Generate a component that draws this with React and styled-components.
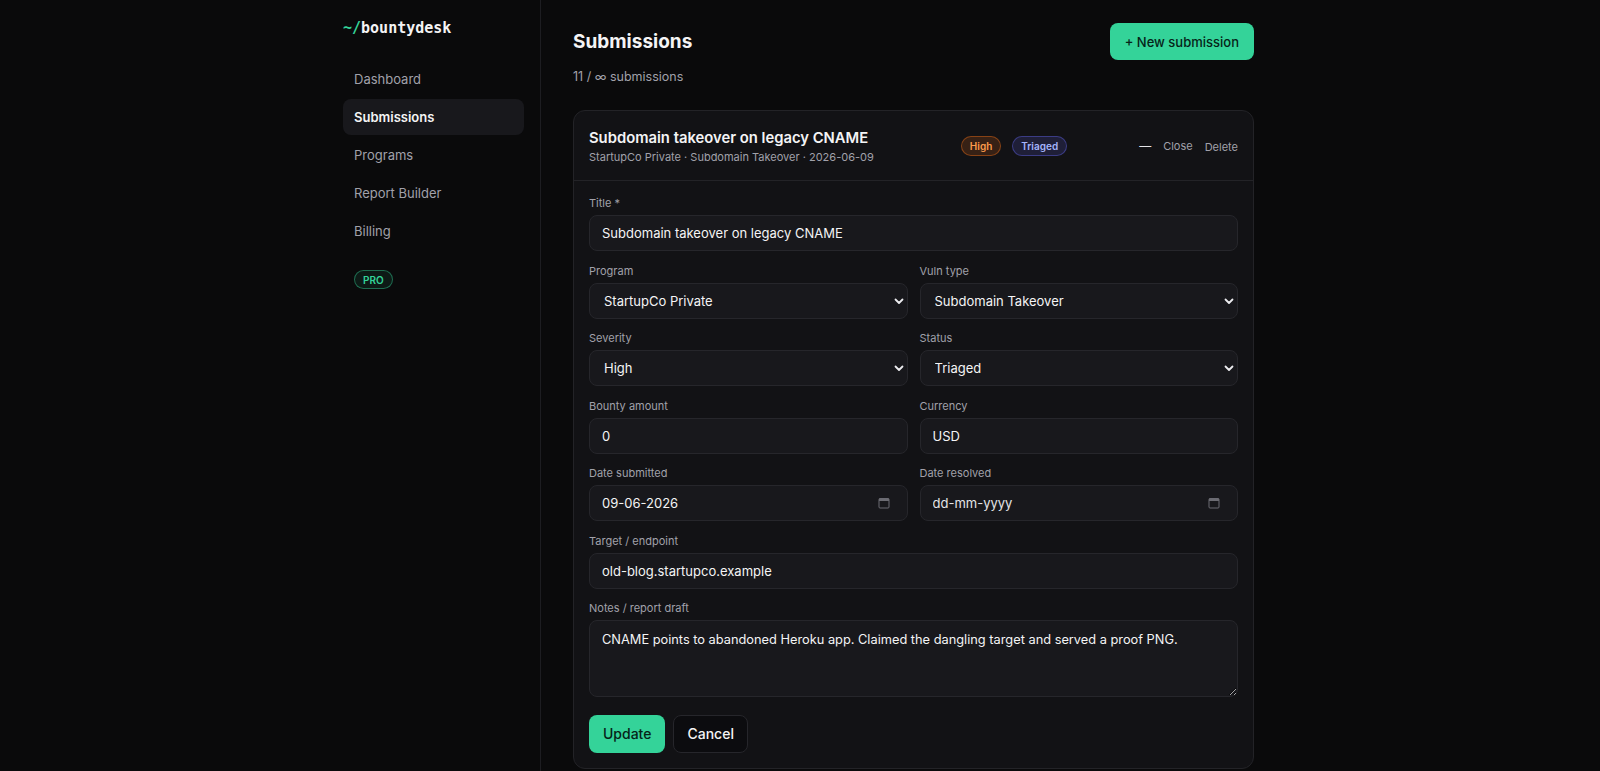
import React from 'react';
import styled, { createGlobalStyle } from 'styled-components';

const GlobalStyle = createGlobalStyle`
  * { box-sizing: border-box; }
  html, body {
    margin: 0;
    padding: 0;
    background: #0a0a0b;
    color-scheme: dark;
  }
  body {
    font-family: Inter, "Noto Sans", "Liberation Sans", sans-serif;
    color: #f4f4f5;
    -webkit-font-smoothing: antialiased;
  }
`;

const GREEN = '#34d399';

const Shell = styled.div`
  display: flex;
  width: 960px;
  margin: 0 auto;
  min-height: 100vh;
`;

const Sidebar = styled.aside`
  flex: 0 0 221px;
  display: flex;
  flex-direction: column;
  align-items: stretch;
  padding: 18px 16px 18px 23px;
  border-right: 1px solid #1d1d21;
`;

const Logo = styled.div`
  font-family: "DejaVu Sans Mono", "Liberation Mono", monospace;
  font-weight: 700;
  font-size: 15px;
  line-height: 20px;
  color: #f4f4f5;
  margin-bottom: 23px;

  span {
    color: ${GREEN};
  }
`;

const NavList = styled.nav`
  display: flex;
  flex-direction: column;
  gap: 2px;
`;

const NavItem = styled.a`
  display: flex;
  align-items: center;
  height: 36px;
  padding: 0 11px;
  border-radius: 8px;
  font-size: 13px;
  text-decoration: none;
  cursor: pointer;
  color: ${(p) => (p.$active ? '#f4f4f5' : '#a1a1aa')};
  background: ${(p) => (p.$active ? '#18181c' : 'transparent')};
  font-weight: ${(p) => (p.$active ? 600 : 400)};
`;

const ProBadge = styled.span`
  align-self: flex-start;
  display: inline-flex;
  align-items: center;
  height: 19px;
  margin: 21px 0 0 11px;
  padding: 0 8px;
  border-radius: 999px;
  border: 1px solid rgba(52, 211, 153, 0.45);
  background: rgba(52, 211, 153, 0.08);
  color: ${GREEN};
  font-size: 10px;
  font-weight: 600;
`;

const Main = styled.main`
  flex: 1;
  padding: 23px 26px 32px 32px;
`;

const Content = styled.div`
  max-width: 681px;
`;

const HeaderRow = styled.div`
  display: flex;
  align-items: center;
  justify-content: space-between;
`;

const PageTitle = styled.h1`
  margin: 0;
  font-size: 19px;
  line-height: 28px;
  font-weight: 700;
  color: #f4f4f5;
`;

const PrimaryButton = styled.button`
  height: ${(p) => p.$h || 37}px;
  padding: 0 ${(p) => p.$px || 15}px;
  border: none;
  border-radius: 8px;
  background: ${GREEN};
  color: #062318;
  font-family: inherit;
  font-size: ${(p) => p.$fs || 13}px;
  font-weight: 500;
  cursor: pointer;
`;

const GhostButton = styled.button`
  height: 38px;
  padding: 0 13px;
  border: 1px solid #26262b;
  border-radius: 8px;
  background: #0c0c0f;
  color: #f4f4f5;
  font-family: inherit;
  font-size: 14px;
  font-weight: 500;
  cursor: pointer;
`;

const Count = styled.div`
  margin-top: 8px;
  font-size: 12.5px;
  line-height: 18px;
  color: #a1a1aa;
`;

const Card = styled.section`
  margin-top: 24px;
  background: #121215;
  border: 1px solid #232327;
  border-radius: 12px;
`;

const CardHeader = styled.header`
  display: flex;
  align-items: center;
  gap: 12px;
  padding: 17px 15px 15px;
  border-bottom: 1px solid #232327;
`;

const TitleBlock = styled.div`
  flex: 1;
  min-width: 0;
`;

const CardTitle = styled.div`
  font-size: 14.8px;
  line-height: 20px;
  font-weight: 600;
  color: #f4f4f5;
`;

const CardMeta = styled.div`
  margin-top: 1px;
  font-size: 11px;
  line-height: 16px;
  color: #a1a1aa;
`;

const Badges = styled.div`
  display: flex;
  gap: 11px;
  margin-top: -2px;
`;

const Badge = styled.span`
  display: inline-flex;
  align-items: center;
  height: 20px;
  padding: 0 8px;
  border-radius: 999px;
  font-size: 10px;
  font-weight: 600;
  color: ${(p) => p.$fg};
  background: ${(p) => p.$bg};
  border: 1px solid ${(p) => p.$border};
`;

const Amount = styled.div`
  width: 72px;
  text-align: right;
  font-size: 12px;
  color: #e4e4e7;
  margin-top: -2px;
`;

const TextButton = styled.button`
  padding: 0;
  border: none;
  background: none;
  color: #a1a1aa;
  font-family: inherit;
  font-size: 11px;
  cursor: pointer;
  margin-top: ${(p) => (p.$lift ? -2 : 1)}px;
`;

const Form = styled.form`
  display: grid;
  gap: 11.5px;
  padding: 14px 15px 15px;
`;

const Row = styled.div`
  display: grid;
  grid-template-columns: 1fr 1fr;
  gap: 12px;
`;

const Field = styled.label`
  display: flex;
  flex-direction: column;
  gap: 4px;
  min-width: 0;
`;

const Label = styled.span`
  font-size: 11px;
  line-height: 16px;
  color: #a1a1aa;
`;

const fieldBox = `
  width: 100%;
  background: #18181c;
  border: 1px solid #26262b;
  border-radius: 8px;
  color: #f4f4f5;
  font-family: inherit;
  font-size: 13px;
  outline: none;
`;

const Input = styled.input`
  ${fieldBox}
  height: 36px;
  padding: 0 12px;
`;

const SelectWrap = styled.div`
  position: relative;
`;

const Select = styled.select`
  ${fieldBox}
  appearance: none;
  height: 36px;
  padding: 0 28px 0 14px;
`;

const Chevron = styled.svg`
  position: absolute;
  right: 4px;
  top: 50%;
  margin-top: -5px;
  pointer-events: none;
`;

const DateShell = styled.div`
  ${fieldBox}
  display: flex;
  align-items: center;
  height: 36px;
  padding: 0 17px 0 12px;
`;

const BareInput = styled.input`
  flex: 1;
  min-width: 0;
  border: none;
  background: none;
  outline: none;
  padding: 0;
  color: #f4f4f5;
  font-family: inherit;
  font-size: 13px;

  &::placeholder {
    color: #e4e4e7;
  }
`;

const TextArea = styled.textarea`
  ${fieldBox}
  height: 77px;
  padding: 9px 12px;
  line-height: 20px;
  font-size: 12.8px;
  resize: vertical;
`;

const Actions = styled.div`
  display: flex;
  gap: 8px;
  margin-top: 6px;
`;

function ChevronIcon() {
  return (
    <Chevron width="10" height="10" viewBox="0 0 10 10" fill="none">
      <path d="M1.5 3.5 L5 7 L8.5 3.5" stroke="#ececef" strokeWidth="1.8" strokeLinecap="round" strokeLinejoin="round" />
    </Chevron>
  );
}

function CalendarIcon() {
  return (
    <svg width="12" height="12" viewBox="0 0 12 12" fill="none">
      <rect x="1" y="1.5" width="10" height="9.5" rx="1" stroke="#6b6b72" strokeWidth="1" />
      <rect x="1" y="1.5" width="10" height="2.5" fill="#6b6b72" />
    </svg>
  );
}

function SelectField({ label, value, options }) {
  return (
    <Field>
      <Label>{label}</Label>
      <SelectWrap>
        <Select defaultValue={value}>
          {options.map((o) => (
            <option key={o}>{o}</option>
          ))}
        </Select>
        <ChevronIcon />
      </SelectWrap>
    </Field>
  );
}

function DateField({ label, value }) {
  return (
    <Field>
      <Label>{label}</Label>
      <DateShell>
        <BareInput defaultValue={value} placeholder="dd-mm-yyyy" />
        <CalendarIcon />
      </DateShell>
    </Field>
  );
}

const NAV = ['Dashboard', 'Submissions', 'Programs', 'Report Builder', 'Billing'];

export default function App() {
  return (
    <>
      <GlobalStyle />
      <Shell>
        <Sidebar>
          <Logo>
            <span>~/</span>bountydesk
          </Logo>
          <NavList>
            {NAV.map((n) => (
              <NavItem key={n} $active={n === 'Submissions'}>
                {n}
              </NavItem>
            ))}
          </NavList>
          <ProBadge>PRO</ProBadge>
        </Sidebar>

        <Main>
          <Content>
            <HeaderRow>
              <PageTitle>Submissions</PageTitle>
              <PrimaryButton>+ New submission</PrimaryButton>
            </HeaderRow>
            <Count>11 / ∞ submissions</Count>

            <Card>
              <CardHeader>
                <TitleBlock>
                  <CardTitle>Subdomain takeover on legacy CNAME</CardTitle>
                  <CardMeta>StartupCo Private · Subdomain Takeover · 2026-06-09</CardMeta>
                </TitleBlock>
                <Badges>
                  <Badge $fg="#fb9a4b" $bg="rgba(249,115,22,0.16)" $border="rgba(249,115,22,0.42)">
                    High
                  </Badge>
                  <Badge $fg="#a5b4fc" $bg="rgba(99,102,241,0.16)" $border="rgba(99,102,241,0.42)">
                    Triaged
                  </Badge>
                </Badges>
                <Amount>—</Amount>
                <TextButton $lift>Close</TextButton>
                <TextButton>Delete</TextButton>
              </CardHeader>

              <Form onSubmit={(e) => e.preventDefault()}>
                <Field>
                  <Label>Title *</Label>
                  <Input defaultValue="Subdomain takeover on legacy CNAME" />
                </Field>
                <Row>
                  <SelectField
                    label="Program"
                    value="StartupCo Private"
                    options={['StartupCo Private', 'Acme Public', 'Globex VDP']}
                  />
                  <SelectField
                    label="Vuln type"
                    value="Subdomain Takeover"
                    options={['Subdomain Takeover', 'XSS', 'SSRF', 'IDOR']}
                  />
                </Row>
                <Row>
                  <SelectField label="Severity" value="High" options={['Critical', 'High', 'Medium', 'Low']} />
                  <SelectField
                    label="Status"
                    value="Triaged"
                    options={['Draft', 'Submitted', 'Triaged', 'Resolved']}
                  />
                </Row>
                <Row>
                  <Field>
                    <Label>Bounty amount</Label>
                    <Input defaultValue="0" />
                  </Field>
                  <Field>
                    <Label>Currency</Label>
                    <Input defaultValue="USD" />
                  </Field>
                </Row>
                <Row>
                  <DateField label="Date submitted" value="09-06-2026" />
                  <DateField label="Date resolved" value="" />
                </Row>
                <Field>
                  <Label>Target / endpoint</Label>
                  <Input defaultValue="old-blog.startupco.example" />
                </Field>
                <Field>
                  <Label>Notes / report draft</Label>
                  <TextArea defaultValue="CNAME points to abandoned Heroku app. Claimed the dangling target and served a proof PNG." />
                </Field>
                <Actions>
                  <PrimaryButton type="submit" $h={38} $px={14} $fs={14}>
                    Update
                  </PrimaryButton>
                  <GhostButton type="button">Cancel</GhostButton>
                </Actions>
              </Form>
            </Card>
          </Content>
        </Main>
      </Shell>
    </>
  );
}
